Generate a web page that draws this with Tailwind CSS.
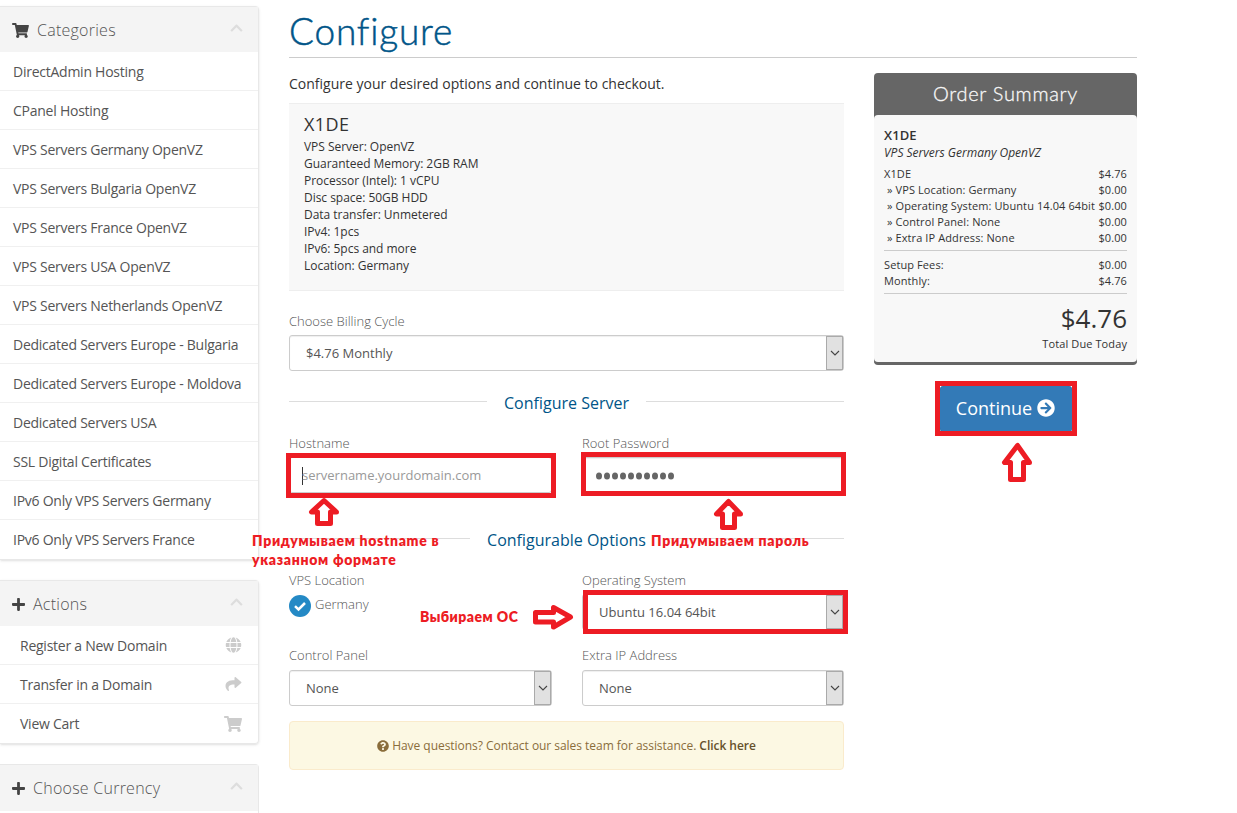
<!DOCTYPE html>
<html lang="en">
<head>
<meta charset="utf-8">
<title>Configure</title>
<script src="https://cdn.jsdelivr.net/npm/@tailwindcss/browser@4"></script>
</head>
<body class="relative h-[813px] w-[1237px] overflow-hidden bg-white font-['Open_Sans',sans-serif] text-[#333]">
<svg class="hidden">
  <symbol id="cart" viewBox="0 0 576 512"><path d="M528.12 301.319l47.273-208C578.806 78.301 567.391 64 551.99 64H159.208l-9.166-44.81C147.758 8.021 137.93 0 126.529 0H24C10.745 0 0 10.745 0 24v16c0 13.255 10.745 24 24 24h69.883l70.248 343.435C147.325 417.1 136 435.222 136 456c0 30.928 25.072 56 56 56s56-25.072 56-56c0-15.674-6.447-29.835-16.824-40h209.647C430.447 426.165 424 440.326 424 456c0 30.928 25.072 56 56 56s56-25.072 56-56c0-22.172-12.888-41.332-31.579-50.405l5.517-24.276c3.413-15.018-8.002-29.319-23.403-29.319H218.117l-6.545-32h293.145c11.206 0 20.92-7.754 23.403-18.681z"/></symbol>
  <symbol id="up" viewBox="0 0 448 512"><path d="M240.971 130.524l194.343 194.343c9.373 9.373 9.373 24.569 0 33.941l-22.667 22.667c-9.357 9.357-24.522 9.375-33.901.04L224 227.495 69.255 381.516c-9.379 9.335-24.544 9.317-33.901-.04l-22.667-22.667c-9.373-9.373-9.373-24.569 0-33.941L207.03 130.525c9.372-9.373 24.568-9.373 33.941-.001z"/></symbol>
  <symbol id="plus" viewBox="0 0 448 512"><path d="M416 208H272V64c0-17.67-14.33-32-32-32h-32c-17.67 0-32 14.33-32 32v144H32c-17.67 0-32 14.33-32 32v32c0 17.67 14.33 32 32 32h144v144c0 17.67 14.33 32 32 32h32c17.67 0 32-14.33 32-32V304h144c17.67 0 32-14.33 32-32v-32c0-17.67-14.33-32-32-32z"/></symbol>
  <symbol id="globe" viewBox="0 0 496 512"><path d="M336.5 160C322 70.7 287.8 8 248 8s-74 62.7-88.5 152h177zM152 256c0 22.2 1.2 43.5 3.3 64h185.3c2.1-20.5 3.3-41.8 3.3-64s-1.2-43.5-3.3-64H155.3c-2.1 20.5-3.3 41.8-3.3 64zm324.7-96c-28.6-67.9-86.5-120.4-158-141.6 24.4 33.8 41.2 84.7 50 141.6h108zM177.2 18.4C105.8 39.6 47.8 92.1 19.3 160h108c8.7-56.9 25.5-107.8 49.9-141.6zM487.4 192H372.7c2.1 21 3.3 42.5 3.3 64s-1.2 43-3.3 64h114.6c5.5-20.5 8.6-41.8 8.6-64s-3.1-43.5-8.5-64zM120 256c0-21.5 1.2-43 3.3-64H8.6C3.2 212.5 0 233.8 0 256s3.2 43.5 8.6 64h114.6c-2-21-3.2-42.5-3.2-64zm39.5 96c14.5 89.3 48.7 152 88.5 152s74-62.7 88.5-152h-177zm159.3 141.6c71.4-21.2 129.4-73.7 158-141.6h-108c-8.8 56.9-25.6 107.8-50 141.6zM19.3 352c28.6 67.9 86.5 120.4 158 141.6-24.4-33.8-41.2-84.7-50-141.6h-108z"/></symbol>
  <symbol id="share" viewBox="0 0 512 512"><path d="M503.691 189.836L327.687 37.851C312.281 24.546 288 35.347 288 56.015v80.053C127.371 137.907 0 170.1 0 322.326c0 61.441 39.581 122.309 83.333 154.132 13.653 9.931 33.111-2.533 28.077-18.631C66.066 312.814 132.917 274.316 288 272.085V360c0 20.7 24.3 31.453 39.687 18.164l176.004-152c11.071-9.562 11.086-26.753 0-36.328z"/></symbol>
  <symbol id="question" viewBox="0 0 512 512"><path d="M504 256c0 136.997-111.043 248-248 248S8 392.997 8 256C8 119.083 119.043 8 256 8s248 111.083 248 248zM262.655 90c-54.497 0-89.255 22.957-116.549 63.758-3.536 5.286-2.353 12.415 2.715 16.258l34.699 26.31c5.205 3.947 12.621 3.008 16.665-2.122 17.864-22.658 30.113-35.797 57.303-35.797 20.429 0 45.698 13.148 45.698 32.958 0 14.976-12.363 22.667-32.534 33.976C247.128 238.528 216 254.941 216 296v4c0 6.627 5.373 12 12 12h56c6.627 0 12-5.373 12-12v-1.333c0-28.462 83.186-29.647 83.186-106.667 0-58.002-60.165-102-116.531-102zM256 338c-25.365 0-46 20.635-46 46 0 25.364 20.635 46 46 46s46-20.636 46-46c0-25.365-20.635-46-46-46z"/></symbol>
  <symbol id="go" viewBox="0 0 512 512"><path d="M256 8c137 0 248 111 248 248S393 504 256 504 8 393 8 256 119 8 256 8zm-28.9 143.6l75.5 72.4H120c-13.3 0-24 10.7-24 24v16c0 13.3 10.7 24 24 24h182.6l-75.5 72.4c-9.7 9.3-9.9 24.8-.4 34.3l11 10.9c9.4 9.4 24.6 9.4 33.9 0L404.3 273c9.4-9.4 9.4-24.6 0-33.9L271.6 106.3c-9.4-9.4-24.6-9.4-33.9 0l-11 10.9c-9.5 9.6-9.3 25.1.4 34.4z"/></symbol>
  <symbol id="down" viewBox="0 0 10 6"><path d="M1 1l4 4 4-4" fill="none" stroke="#444" stroke-width="1.1"/></symbol>
</svg>

<div class="flex">
  <aside class="flex w-[259px] shrink-0 flex-col gap-5 pt-[6px] text-[14px] text-[#555]">
    <section class="rounded-r border-y border-r border-[#e8e8e8] shadow-sm">
      <h2 class="flex h-[45px] items-center bg-[#f4f4f4] pt-px pr-[15px] pl-3 text-[16px] font-light tracking-[0.25px]"><svg class="mr-2 h-[15px] w-[17px] fill-[#444]"><use href="#cart"/></svg><span class="grow">Categories</span><svg class="mb-1 h-[14px] w-[13px] fill-[#ddd]"><use href="#up"/></svg></h2>
      <ul class="divide-y divide-[#f0f0f0] tracking-[-0.25px] *:flex *:h-[39px] *:items-center *:pl-[13px]">
        <li>DirectAdmin Hosting</li><li>CPanel Hosting</li><li>VPS Servers Germany OpenVZ</li><li>VPS Servers Bulgaria OpenVZ</li><li>VPS Servers France OpenVZ</li><li>VPS Servers USA OpenVZ</li><li>VPS Servers Netherlands OpenVZ</li><li>Dedicated Servers Europe - Bulgaria</li><li>Dedicated Servers Europe - Moldova</li><li>Dedicated Servers USA</li><li>SSL Digital Certificates</li><li>IPv6 Only VPS Servers Germany</li><li>IPv6 Only VPS Servers France</li>
      </ul>
    </section>
    <section class="rounded-r border-y border-r border-[#e8e8e8] shadow-sm">
      <h2 class="flex h-[45px] items-center bg-[#f4f4f4] pt-px pr-[15px] pl-3 text-[16px] font-light tracking-[0.25px]"><svg class="mr-2 h-[15px] w-[13px] fill-[#444]"><use href="#plus"/></svg><span class="grow">Actions</span><svg class="mb-1 h-[14px] w-[13px] fill-[#ddd]"><use href="#up"/></svg></h2>
      <ul class="divide-y divide-[#f0f0f0] tracking-[-0.25px] *:flex *:h-[39px] *:items-center *:justify-between *:pr-4 *:pl-5">
        <li>Register a New Domain<svg class="h-4 w-[17px] fill-[#ccc]"><use href="#globe"/></svg></li>
        <li>Transfer in a Domain<svg class="h-4 w-[17px] fill-[#ccc]"><use href="#share"/></svg></li>
        <li>View Cart<svg class="h-4 w-[18px] fill-[#ccc]"><use href="#cart"/></svg></li>
      </ul>
    </section>
    <section class="h-[60px] rounded-tr border-t border-r border-[#e8e8e8]">
      <h2 class="flex h-[46px] items-center bg-[#f4f4f4] pr-[15px] pl-3 text-[16px] font-light tracking-[0.25px]"><svg class="mr-2 h-[15px] w-[13px] fill-[#444]"><use href="#plus"/></svg><span class="grow">Choose Currency</span><svg class="mb-1 h-[14px] w-[13px] fill-[#ddd]"><use href="#up"/></svg></h2>
    </section>
  </aside>

  <main class="ml-[30px] w-[848px]">
    <h1 class="h-[58px] border-b border-[#ccc] pt-[8px] font-[Lato] text-[37px] leading-[46px] font-light tracking-[0.8px] text-[#058] [-webkit-text-stroke:0.5px_#058]">Configure</h1>
    <div class="flex justify-between">
      <div class="w-[555px]">
        <p class="h-[45px] pt-4 text-[14px] leading-5">Configure your desired options and continue to checkout.</p>
        <div class="h-[188px] border-y border-[#eee] bg-[#f8f8f8] px-[15px] pt-[8px] text-[12px] leading-[17px] tracking-[-0.03px]">
          <p class="mb-[2px] text-[18px] leading-6 tracking-[0.4px]">X1DE</p>
          <p>VPS Server: OpenVZ</p><p>Guaranteed Memory: 2GB RAM</p><p>Processor (Intel): 1 vCPU</p><p>Disc space: 50GB HDD</p><p>Data transfer: Unmetered</p><p>IPv4: 1pcs</p><p>IPv6: 5pcs and more</p><p>Location: Germany</p>
        </div>
        <div class="pt-5 text-[13px] font-light text-[#555]">
          <p class="h-6 leading-5">Choose Billing Cycle</p>
          <div class="flex h-9 items-stretch justify-between rounded-[3px] border border-[#ccc] pl-4 font-normal shadow-[inset_0_1px_1px_#0001]"><span class="self-center pt-px">$4.76 Monthly</span><span class="flex w-[17px] items-center justify-center border border-[#aaa] bg-[#e1e1e1]"><svg class="h-[6px] w-[10px]"><use href="#down"/></svg></span></div>
        </div>
        <div class="mt-5 flex h-6 items-center text-[16px] text-[#058]"><i class="mb-[3px] h-px grow bg-[#ddd]"></i><span class="mx-[17px]">Configure Server</span><i class="mb-[3px] h-px grow bg-[#ddd]"></i></div>
        <div class="grid grid-cols-[263px_262px] gap-x-[30px] pt-[18px] text-[13px] font-light text-[#555]">
          <p class="h-6 leading-5">Hostname</p><p class="h-6 leading-5">Root Password</p>
          <div class="flex h-9 items-center rounded-[3px] border border-[#ccc] pt-px pl-3 font-normal text-[#999]"><i class="-mr-px h-[18px] w-px bg-[#333]"></i>servername.yourdomain.com</div>
          <div class="flex h-9 items-center rounded-[3px] border border-[#ccc] pt-px pl-[13px] shadow-[inset_0_1px_1px_#0001]"><svg class="h-2 w-[80px] fill-[#666]"><g><ellipse cx="3" cy="4" rx="3" ry="3.5"/><ellipse cx="11" cy="4" rx="3" ry="3.5"/><ellipse cx="19" cy="4" rx="3" ry="3.5"/><ellipse cx="27" cy="4" rx="3" ry="3.5"/><ellipse cx="35" cy="4" rx="3" ry="3.5"/><ellipse cx="43" cy="4" rx="3" ry="3.5"/><ellipse cx="51" cy="4" rx="3" ry="3.5"/><ellipse cx="59" cy="4" rx="3" ry="3.5"/><ellipse cx="67" cy="4" rx="3" ry="3.5"/><ellipse cx="75" cy="4" rx="3" ry="3.5"/></g></svg></div>
        </div>
        <div class="mt-[35px] flex h-6 items-center text-[16px] text-[#058]"><i class="mb-[3px] h-px grow bg-[#ddd]"></i><span class="mx-[17px]">Configurable Options</span><i class="mb-[3px] h-px grow bg-[#ddd]"></i></div>
        <div class="grid grid-cols-[263px_262px] grid-rows-[24px_51px_25px_36px] gap-x-[30px] pt-[18px] text-[13px] font-light text-[#555]">
          <p class="leading-5">VPS Location</p><p class="leading-5">Operating System</p>
          <div class="flex h-[22px] gap-1 leading-[21px]"><svg class="mt-[1px] h-[22px] w-[22px]" viewBox="0 0 22 22"><circle cx="11" cy="11" r="11" fill="#2489c5"/><path d="M6 11.2l3.5 3.3L16 8" fill="none" stroke="#fff" stroke-width="2.5"/></svg>Germany</div>
          <div class="flex h-9 items-stretch justify-between rounded-[3px] border border-[#ccc] pl-4 font-normal"><span class="self-center pt-px">Ubuntu 16.04 64bit</span><span class="flex w-[17px] items-center justify-center border border-[#aaa] bg-[#e1e1e1]"><svg class="h-[6px] w-[10px]"><use href="#down"/></svg></span></div>
          <p class="leading-5">Control Panel</p><p class="leading-5">Extra IP Address</p>
          <div class="flex h-9 items-stretch justify-between rounded-[3px] border border-[#ccc] pl-4 font-normal shadow-[inset_0_1px_1px_#0001]"><span class="self-center pt-px">None</span><span class="flex w-[17px] items-center justify-center border border-[#aaa] bg-[#e1e1e1]"><svg class="h-[6px] w-[10px]"><use href="#down"/></svg></span></div>
          <div class="flex h-9 items-stretch justify-between rounded-[3px] border border-[#ccc] pl-4 font-normal shadow-[inset_0_1px_1px_#0001]"><span class="self-center pt-px">None</span><span class="flex w-[17px] items-center justify-center border border-[#aaa] bg-[#e1e1e1]"><svg class="h-[6px] w-[10px]"><use href="#down"/></svg></span></div>
        </div>
        <div class="mt-[15px] flex h-[49px] items-center justify-center rounded border border-[#faebcc] bg-[#fcf8e3] text-[12px] tracking-[-0.04px] text-[#8a6d3b]"><svg class="mr-[3px] h-3 w-3 fill-[#8a6d3b]"><use href="#question"/></svg>Have questions? Contact our sales team for assistance.&nbsp;<b class="font-semibold text-[#66512c]">Click here</b></div>
      </div>

      <div class="mt-[15px] w-[263px]">
        <div class="rounded border-b-[3px] border-[#666] bg-[#666]">
          <h2 class="h-[42px] text-center font-[Lato] text-[20px] leading-[41px] font-light tracking-[0.7px] text-[#f8f8f8] [-webkit-text-stroke:0.3px_#f8f8f8]">Order Summary</h2>
          <div class="h-[247px] rounded bg-[#f8f8f8] px-[10px] pt-[12px] text-[11px] leading-4 tracking-[0.1px]">
            <p class="text-[13px] leading-[17px] font-semibold">X1DE</p>
            <p class="mb-[5px] h-[17px] text-[12px] leading-[17px] tracking-normal italic">VPS Servers Germany OpenVZ</p>
            <div class="flex justify-between"><span>X1DE</span><span>$4.76</span></div>
            <div class="flex justify-between"><span class="pl-[3px]">» VPS Location: Germany</span><span>$0.00</span></div>
            <div class="flex justify-between whitespace-nowrap"><span class="pl-[3px]">» Operating System: Ubuntu 14.04 64bit</span><span>$0.00</span></div>
            <div class="flex justify-between"><span class="pl-[3px]">» Control Panel: None</span><span>$0.00</span></div>
            <div class="flex justify-between"><span class="pl-[3px]">» Extra IP Address: None</span><span>$0.00</span></div>
            <div class="mt-1 border-y border-[#ccc] pt-[6px] pb-1"><div class="flex justify-between"><span>Setup Fees:</span><span>$0.00</span></div><div class="flex justify-between"><span>Monthly:</span><span>$4.76</span></div></div>
            <p class="mt-[7px] text-right text-[26px] leading-[35px] tracking-normal">$4.76</p>
            <p class="text-right leading-4">Total Due Today</p>
          </div>
        </div>
        <div class="mt-[20px] ml-[65px] flex h-[48px] w-[134px] items-center justify-center gap-[5px] rounded-md border border-[#2e6da4] bg-[#337ab7] pr-px pb-[2px] text-[18px] text-white">Continue<svg class="h-[18px] w-[18px] fill-white"><use href="#go"/></svg></div>
      </div>
    </div>
  </main>
</div>

<!-- annotations laid over the page -->
<svg class="absolute inset-0" width="1237" height="813" fill="none" stroke="#ed1c24" stroke-width="5">
  <rect x="288.500" y="455.500" width="265" height="40"/>
  <rect x="583.500" y="454.500" width="260" height="39"/>
  <rect x="585.500" y="592.500" width="260" height="39"/>
  <rect x="937.500" y="383.500" width="137" height="50"/>
  <g stroke-linejoin="round">
    <path d="M324 500.500l-12.500 11.500h6v11.500h13V512h6z"/>
    <path d="M728.500 501.500l-12 12.500h6v13.500h12V514h6z"/>
    <path d="M1017.500 445.500l-13 17h6v17h13v-17h6z"/>
    <path d="M570.500 617l-17-9.500v5h-18v9.500h18v5z"/>
  </g>
</svg>
<p class="absolute top-[531px] left-[252px] font-[Lato,'Open_Sans'] text-[14px] leading-[19px] font-extrabold tracking-[0.7px] whitespace-nowrap text-[#ed1c24]">Придумываем hostname в<br>указанном формате</p>
<p class="absolute top-[531px] left-[651px] font-[Lato,'Open_Sans'] text-[14px] leading-[19px] font-extrabold tracking-[0.7px] whitespace-nowrap text-[#ed1c24]">Придумываем пароль</p>
<p class="absolute top-[607px] left-[420px] font-[Lato,'Open_Sans'] text-[14px] leading-[19px] font-extrabold tracking-[0.45px] whitespace-nowrap text-[#ed1c24]">Выбираем ОС</p>
</body>
</html>
